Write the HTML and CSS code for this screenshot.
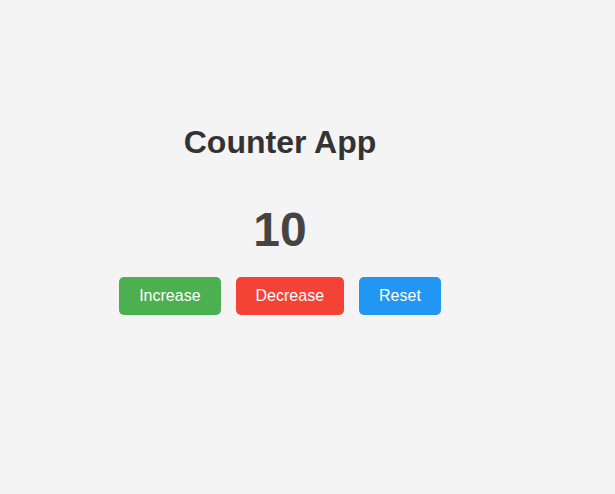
FILE: index.html
```html
<!DOCTYPE html>
<html lang="en">
<head>
<meta charset="utf-8">
<title>Counter App</title>
<link rel="stylesheet" href="styles.css">
</head>
<body>
  <main class="app">
    <h1 class="title">Counter App</h1>
    <div class="count">10</div>
    <div class="actions">
      <button class="btn btn-increase">Increase</button>
      <button class="btn btn-decrease">Decrease</button>
      <button class="btn btn-reset">Reset</button>
    </div>
  </main>
</body>
</html>
```

FILE: styles.css
```css
html, body {
  margin: 0;
  padding: 0;
}

body {
  background: #f4f4f4;
  font-family: "Liberation Sans", Arial, sans-serif;
  min-height: 494px;
}

.app {
  width: 560px;
  display: flex;
  flex-direction: column;
  align-items: center;
  padding-top: 124px;
}

.title {
  margin: 0;
  font-size: 32px;
  font-weight: bold;
  line-height: normal;
  color: #333333;
}

.count {
  margin-top: 41px;
  font-size: 48px;
  font-weight: bold;
  line-height: normal;
  color: #444444;
}

.actions {
  margin-top: 20px;
  display: flex;
  gap: 15px;
}

.btn {
  font-family: "Liberation Sans", Arial, sans-serif;
  font-size: 16px;
  line-height: normal;
  padding: 10px 20px;
  border: none;
  border-radius: 5px;
  color: #ffffff;
  cursor: pointer;
}

.btn-increase { background: #4caf50; }
.btn-decrease { background: #f44336; }
.btn-reset { background: #2196f3; }
```
